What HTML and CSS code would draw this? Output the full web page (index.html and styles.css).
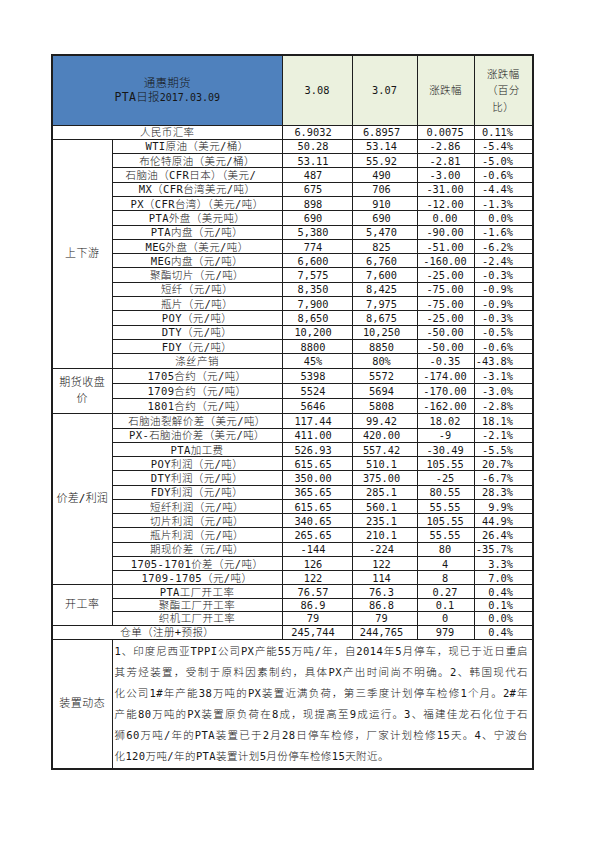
FILE: index.html
```html
<!DOCTYPE html>
<html lang="zh">
<head>
<meta charset="utf-8">
<title>PTA日报</title>
<link rel="stylesheet" href="styles.css">
</head>
<body>
<table class="sheet">
<colgroup>
<col class="w-cat"><col class="w-name"><col class="w-c1"><col class="w-c2"><col class="w-c3"><col class="w-c4">
</colgroup>
<tr class="hdr">
<td colspan="2" class="title"><div>通惠期货</div><div>PTA日报<span class="lat">2017.03.09</span></div></td>
<td class="hd lat">3.08</td>
<td class="hd lat">3.07</td>
<td class="hd">涨跌幅</td>
<td class="hd wrap">涨跌幅<br>（百分<br>比）</td>
</tr>
<tr class="ra"><td colspan="2">人民币汇率</td><td class="n c1">6.9032</td><td class="n c2">6.8957</td><td class="n c3">0.0075</td><td class="n c4">0.11%</td></tr>
<tr class="ra"><td rowspan="16" class="cat">上下游</td><td>WTI原油（美元/桶）</td><td class="n c1">50.28</td><td class="n c2">53.14</td><td class="n c3">-2.86</td><td class="n c4">-5.4%</td></tr>
<tr class="ra"><td>布伦特原油（美元/桶）</td><td class="n c1">53.11</td><td class="n c2">55.92</td><td class="n c3">-2.81</td><td class="n c4">-5.0%</td></tr>
<tr class="ra"><td class="clip">石脑油（CFR日本）（美元/</td><td class="n c1">487</td><td class="n c2">490</td><td class="n c3">-3.00</td><td class="n c4">-0.6%</td></tr>
<tr class="ra"><td>MX（CFR台湾美元/吨）</td><td class="n c1">675</td><td class="n c2">706</td><td class="n c3">-31.00</td><td class="n c4">-4.4%</td></tr>
<tr class="ra"><td>PX（CFR台湾）（美元/吨）</td><td class="n c1">898</td><td class="n c2">910</td><td class="n c3">-12.00</td><td class="n c4">-1.3%</td></tr>
<tr class="ra"><td>PTA外盘（美元吨）</td><td class="n c1">690</td><td class="n c2">690</td><td class="n c3">0.00</td><td class="n c4">0.0%</td></tr>
<tr class="ra"><td>PTA内盘（元/吨）</td><td class="n c1">5,380</td><td class="n c2">5,470</td><td class="n c3">-90.00</td><td class="n c4">-1.6%</td></tr>
<tr class="ra"><td>MEG外盘（美元/吨）</td><td class="n c1">774</td><td class="n c2">825</td><td class="n c3">-51.00</td><td class="n c4">-6.2%</td></tr>
<tr class="ra"><td>MEG内盘（元/吨）</td><td class="n c1">6,600</td><td class="n c2">6,760</td><td class="n c3">-160.00</td><td class="n c4">-2.4%</td></tr>
<tr class="ra"><td>聚酯切片（元/吨）</td><td class="n c1">7,575</td><td class="n c2">7,600</td><td class="n c3">-25.00</td><td class="n c4">-0.3%</td></tr>
<tr class="ra"><td>短纤（元/吨）</td><td class="n c1">8,350</td><td class="n c2">8,425</td><td class="n c3">-75.00</td><td class="n c4">-0.9%</td></tr>
<tr class="ra"><td>瓶片（元/吨）</td><td class="n c1">7,900</td><td class="n c2">7,975</td><td class="n c3">-75.00</td><td class="n c4">-0.9%</td></tr>
<tr class="ra"><td>POY（元/吨）</td><td class="n c1">8,650</td><td class="n c2">8,675</td><td class="n c3">-25.00</td><td class="n c4">-0.3%</td></tr>
<tr class="ra"><td>DTY（元/吨）</td><td class="n c1">10,200</td><td class="n c2">10,250</td><td class="n c3">-50.00</td><td class="n c4">-0.5%</td></tr>
<tr class="ra"><td>FDY（元/吨）</td><td class="n c1">8800</td><td class="n c2">8850</td><td class="n c3">-50.00</td><td class="n c4">-0.6%</td></tr>
<tr class="ra"><td>涤丝产销</td><td class="n c1">45%</td><td class="n c2">80%</td><td class="n c3">-0.35</td><td class="n c4">-43.8%</td></tr>
<tr class="rb"><td rowspan="3" class="cat">期货收盘价</td><td>1705合约（元/吨）</td><td class="n c1">5398</td><td class="n c2">5572</td><td class="n c3">-174.00</td><td class="n c4">-3.1%</td></tr>
<tr class="rb"><td>1709合约（元/吨）</td><td class="n c1">5524</td><td class="n c2">5694</td><td class="n c3">-170.00</td><td class="n c4">-3.0%</td></tr>
<tr class="rb"><td>1801合约（元/吨）</td><td class="n c1">5646</td><td class="n c2">5808</td><td class="n c3">-162.00</td><td class="n c4">-2.8%</td></tr>
<tr class="rc"><td rowspan="12" class="cat one">价差/利润</td><td>石脑油裂解价差（美元/吨）</td><td class="n c1">117.44</td><td class="n c2">99.42</td><td class="n c3">18.02</td><td class="n c4">18.1%</td></tr>
<tr class="rc"><td>PX-石脑油价差（美元/吨）</td><td class="n c1">411.00</td><td class="n c2">420.00</td><td class="n c3">-9</td><td class="n c4">-2.1%</td></tr>
<tr class="rc"><td>PTA加工费</td><td class="n c1">526.93</td><td class="n c2">557.42</td><td class="n c3">-30.49</td><td class="n c4">-5.5%</td></tr>
<tr class="rc"><td>POY利润（元/吨）</td><td class="n c1">615.65</td><td class="n c2">510.1</td><td class="n c3">105.55</td><td class="n c4">20.7%</td></tr>
<tr class="rc"><td>DTY利润（元/吨）</td><td class="n c1">350.00</td><td class="n c2">375.00</td><td class="n c3">-25</td><td class="n c4">-6.7%</td></tr>
<tr class="rc"><td>FDY利润（元/吨）</td><td class="n c1">365.65</td><td class="n c2">285.1</td><td class="n c3">80.55</td><td class="n c4">28.3%</td></tr>
<tr class="rc"><td>短纤利润（元/吨）</td><td class="n c1">615.65</td><td class="n c2">560.1</td><td class="n c3">55.55</td><td class="n c4">9.9%</td></tr>
<tr class="rc"><td>切片利润（元/吨）</td><td class="n c1">340.65</td><td class="n c2">235.1</td><td class="n c3">105.55</td><td class="n c4">44.9%</td></tr>
<tr class="rc"><td>瓶片利润（元/吨）</td><td class="n c1">265.65</td><td class="n c2">210.1</td><td class="n c3">55.55</td><td class="n c4">26.4%</td></tr>
<tr class="rc"><td>期现价差（元/吨）</td><td class="n c1">-144</td><td class="n c2">-224</td><td class="n c3">80</td><td class="n c4">-35.7%</td></tr>
<tr class="rc"><td>1705-1701价差（元/吨）</td><td class="n c1">126</td><td class="n c2">122</td><td class="n c3">4</td><td class="n c4">3.3%</td></tr>
<tr class="rc"><td>1709-1705（元/吨）</td><td class="n c1">122</td><td class="n c2">114</td><td class="n c3">8</td><td class="n c4">7.0%</td></tr>
<tr class="rd"><td rowspan="3" class="cat">开工率</td><td>PTA工厂开工率</td><td class="n c1">76.57</td><td class="n c2">76.3</td><td class="n c3">0.27</td><td class="n c4">0.4%</td></tr>
<tr class="rd"><td>聚酯工厂开工率</td><td class="n c1">86.9</td><td class="n c2">86.8</td><td class="n c3">0.1</td><td class="n c4">0.1%</td></tr>
<tr class="rd"><td>织机工厂开工率</td><td class="n c1">79</td><td class="n c2">79</td><td class="n c3">0</td><td class="n c4">0.0%</td></tr>
<tr class="ra"><td colspan="2">仓单（注册+预报）</td><td class="n c1">245,744</td><td class="n c2">244,765</td><td class="n c3">979</td><td class="n c4">0.4%</td></tr>
<tr class="news"><td class="cat">装置动态</td>
<td colspan="5" class="text">
<div class="ln">1、印度尼西亚TPPI公司PX产能55万吨/年，自2014年5月停车，现已于近日重启</div>
<div class="ln">其芳烃装置，受制于原料因素制约，具体PX产出时间尚不明确。2、韩国现代石</div>
<div class="ln">化公司1#年产能38万吨的PX装置近满负荷，第三季度计划停车检修1个月。2#年</div>
<div class="ln">产能80万吨的PX装置原负荷在8成，现提高至9成运行。3、福建佳龙石化位于石</div>
<div class="ln">狮60万吨/年的PTA装置已于2月28日停车检修，厂家计划检修15天。4、宁波台</div>
<div class="ln last">化120万吨/年的PTA装置计划5月份停车检修15天附近。</div>
</td></tr>
</table>
</body>
</html>
```

FILE: styles.css
```css
body {
  margin: 0;
  background: #ffffff;
  color: #161616;
  font-family: "DejaVu Sans Mono", "Noto Sans CJK SC", monospace;
}

.sheet {
  border-collapse: collapse;
  table-layout: fixed;
  width: 481px;
  margin: 54px 0 0 51px;
  border: 2px solid #1e1e1e;
}

.w-cat { width: 60px; }
.w-name { width: 170px; }
.w-c1 { width: 70px; }
.w-c2 { width: 65px; }
.w-c3 { width: 57px; }
.w-c4 { width: 59px; }

.sheet td {
  border: 1px solid #1e1e1e;
  padding: 0;
  text-align: center;
  vertical-align: middle;
  font-size: 10.5px;
  line-height: 12px;
  letter-spacing: 0.4px;
  white-space: nowrap;
  overflow: hidden;
  font-weight: 300;
}

.hdr { height: 70px; }
.ra { height: 14.3px; }
.rb { height: 15.3px; }
.rc { height: 14.25px; }
.rd { height: 13.4px; }
.news { height: 130px; }

.sheet td.title {
  background: #4f81bd;
  font-size: 11.5px;
  line-height: 14px;
  letter-spacing: 0.3px;
}

.sheet td.title .lat {
  font-size: 10px;
  letter-spacing: 0;
}

.sheet td.hd {
  background: #ebf1de;
  font-size: 10.5px;
  line-height: 16.5px;
}

.sheet td.hd.lat {
  font-size: 10.3px;
  letter-spacing: 0;
}

.sheet td.wrap {
  white-space: normal;
}

.sheet td.n {
  font-size: 10.3px;
  letter-spacing: 0;
}

.sheet td.c1 { padding-right: 8px; }
.sheet td.c2 { padding-right: 6px; }
.sheet td.c3 { padding-right: 1px; }
.sheet td.c4 { text-align: right; padding-right: 19px; }

.sheet td.clip {
  text-align: left;
  padding-left: 13px;
}

.sheet td.cat {
  white-space: normal;
  padding: 0 3px;
  font-size: 11px;
  line-height: 16px;
  letter-spacing: 0.5px;
}

.sheet td.cat.one {
  white-space: nowrap;
  padding: 0;
  letter-spacing: 0.2px;
}

.sheet td.text {
  white-space: normal;
  text-align: left;
  padding: 1px 4px 1px 2px;
  font-size: 10.5px;
  line-height: 21px;
}

.ln {
  text-align: justify;
  text-align-last: justify;
}

.ln.last {
  text-align-last: left;
}
```
